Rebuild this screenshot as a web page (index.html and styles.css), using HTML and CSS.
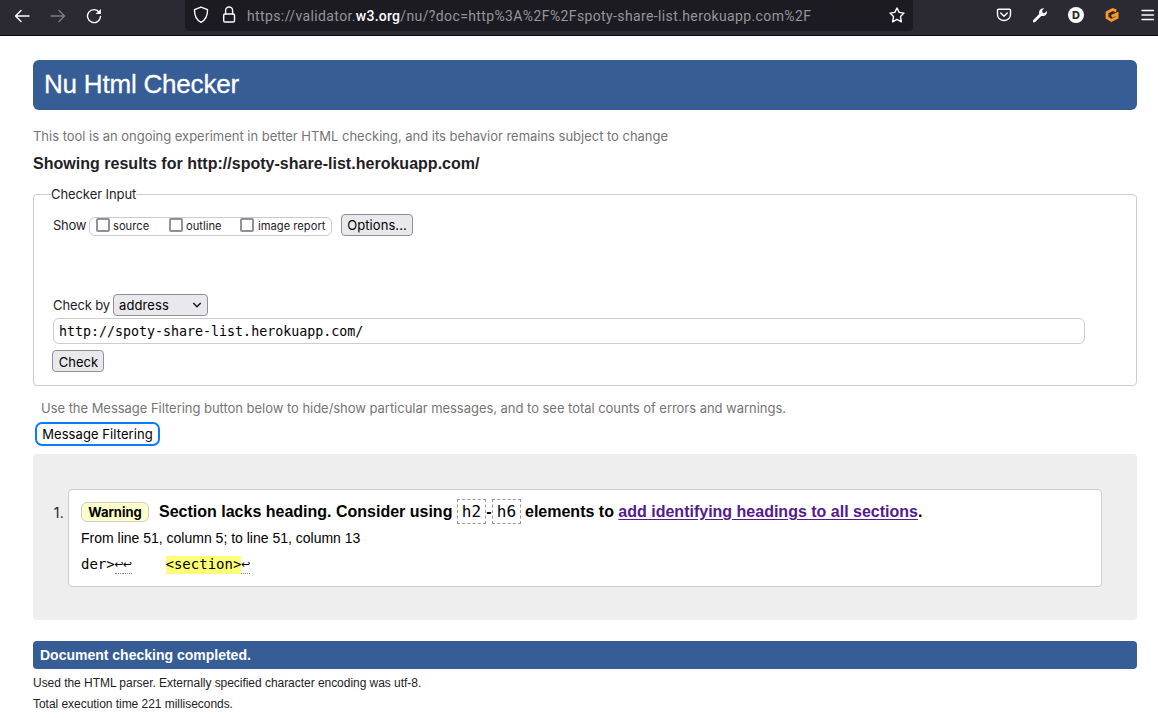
FILE: index.html
```html
<!DOCTYPE html>
<html lang="en">
<head>
<meta charset="utf-8">
<title>Showing results for http://spoty-share-list.herokuapp.com/ - Nu Html Checker</title>
<link rel="stylesheet" href="styles.css">
</head>
<body>
<nav class="toolbar">
  <div class="nav-icons">
    <svg width="16" height="16" viewBox="0 0 16 16" class="line"><path d="M1.5 8H15M7 2.5L1.5 8L7 13.500"/></svg>
    <svg width="16" height="16" viewBox="0 0 16 16" class="line dim"><path d="M1 8H14.500M9 2.500L14.500 8L9 13.500"/></svg>
    <svg width="16" height="16" viewBox="0 0 16 16" class="line"><path d="M13.300 4.300A6.500 6.500 0 1 0 14.500 8.500"/><path class="solid" d="M14.900 1V6H9.600Z"/></svg>
  </div>
  <div class="urlbar">
    <svg width="16" height="18" viewBox="0 0 16 18" class="line"><path d="M8 1.200L14.500 3.700C14.600 9.500 13 13.700 8 16.300C3 13.700 1.400 9.500 1.500 3.700Z"/></svg>
    <svg width="14" height="18" viewBox="0 0 14 18" class="line"><rect x="1.700" y="8" width="10.800" height="8" rx="1.300"/><path d="M3.600 8V4.500A3.500 3.500 0 0 1 10.600 4.500V8"/></svg>
    <span class="url">https://validator.<b>w3.org</b>/nu/?doc=http%3A%2F%2Fspoty-share-list.herokuapp.com%2F</span>
    <svg width="16" height="16" viewBox="0 0 16 16" class="line star"><path d="M8 1L10.200 5.400L15 6.100L11.500 9.600L12.400 14.800L8 12.300L3.600 14.800L4.500 9.600L1 6.100L5.800 5.400Z"/></svg>
  </div>
  <div class="tools">
    <svg width="16" height="16" viewBox="0 0 16 16" class="line"><path d="M2.500 2.200H13.500Q14.500 2.200 14.500 3.200V7.500A6.500 6 0 0 1 1.500 7.500V3.200Q1.500 2.200 2.500 2.200ZM4.700 6L8 9.200L11.300 6"/></svg>
    <svg width="16" height="16" viewBox="0 0 16 16"><path fill="#fbfbfe" d="M1.300 13L7.200 7.100C6.500 4 8.500 1 12.200 1.300L10.300 3.300V5.300L11.500 6.200L13 5.800L15 3.900C15.400 7.500 12.400 9.600 9.300 9L3.200 15Q2 15.900 1.200 14.900Q.5 14 1.300 13Z"/></svg>
    <span class="badge-d">D</span>
    <svg width="16" height="16" viewBox="0 0 16 16" class="g-logo"><path d="M12.300 3.900L8.600 2.500L3 5.600V10.800L7.500 13.400L13.100 10.500V7L7.600 9.400"/></svg>
    <svg width="16" height="16" viewBox="0 0 16 16" class="line menu"><path d="M2 3.500H13.500M2 8H13.500M2 12.500H13.500"/></svg>
  </div>
</nav>
<main class="page">
  <h1 class="banner">Nu Html Checker</h1>
  <p class="note intro">This tool is an ongoing experiment in better HTML checking, and its behavior remains subject to change</p>
  <h2 class="title">Showing results for http://spoty-share-list.herokuapp.com/</h2>
  <fieldset class="inputs">
    <legend>Checker Input</legend>
    <div class="show-row">
      <span class="show-label">Show</span>
      <span class="checks">
        <label class="c1"><input type="checkbox"><span>source</span></label>
        <label class="c2"><input type="checkbox"><span>outline</span></label>
        <label class="c3"><input type="checkbox"><span>image report</span></label>
      </span>
      <button class="btn options">Options...</button>
    </div>
    <div class="by-row">
      <span class="by-label">Check by</span>
      <button class="btn select"><span>address</span><svg width="10" height="8" viewBox="0 0 10 8"><path d="M1.300 2L5 5.700L8.700 2" fill="none" stroke="#15141a" stroke-width="1.500"/></svg></button>
    </div>
    <input class="address" type="text" spellcheck="false" value="http://spoty-share-list.herokuapp.com/">
    <button class="btn check">Check</button>
  </fieldset>
  <p class="note hint">Use the Message Filtering button below to hide/show particular messages, and to see total counts of errors and warnings.</p>
  <button class="filter">Message Filtering</button>
  <section class="results">
    <span class="num">1.</span>
    <article class="card">
      <p class="message"><strong class="warning">Warning</strong><span class="m1">Section lacks heading. Consider using</span><code>h2</code><span class="dash">-</span><code>h6</code><span class="m2">elements to <a href="#">add identifying headings to all sections</a>.</span></p>
      <p class="location">From line 51, column 5; to line 51, column 13</p>
      <p class="extract">der&gt;<span class="lf">↩</span><span class="lf">↩</span><mark>&lt;section&gt;</mark><span class="lf">↩</span></p>
    </article>
  </section>
  <p class="done">Document checking completed.</p>
  <p class="stat">Used the HTML parser. Externally specified character encoding was utf-8.</p>
  <p class="stat">Total execution time 221 milliseconds.</p>
</main>
</body>
</html>
```

FILE: styles.css
```css
* { box-sizing: border-box; }
body { margin: 0; background: #fff; color: #1f2126; font-family: Inter, sans-serif; font-size: 13px; letter-spacing: -.03px; height: 718px; overflow: hidden; }
p, h1, h2 { margin: 0; white-space: nowrap; }
svg { display: block; flex: none; }

.toolbar { display: flex; height: 36px; background: #2b2a33; border-bottom: 1px solid #0c0c0d; }
.line { fill: none; stroke: #fbfbfe; stroke-width: 1.4; stroke-linecap: round; stroke-linejoin: round; }
.line .solid { fill: #fbfbfe; stroke: none; }
.dim { opacity: .4; }
.nav-icons { display: flex; gap: 20px; width: 185px; padding: 8px 0 0 14px; }
.urlbar { display: flex; width: 728px; height: 31px; padding: 6px 8px 0; background: #1c1b22; border-radius: 0 0 4px 4px; }
.urlbar svg + svg { margin-left: 13px; }
.url { margin: 2px 0 0 11px; font: 14px/17px Roboto, sans-serif; letter-spacing: .38px; color: #96959d; white-space: nowrap; }
.url b { font-weight: 500; letter-spacing: .25px; color: #fbfbfe; }
.star { margin: 1px 0 0 auto; }
.tools { display: flex; flex: 1; gap: 20px; padding: 7px 0 0 83px; }
.badge-d { flex: none; width: 16px; height: 16px; border-radius: 50%; background: #fff; color: #2b2a33; font: 800 11px/16px Inter, sans-serif; text-align: center; }
.g-logo path { fill: none; stroke: #ff9a27; stroke-width: 2.8; stroke-linejoin: miter; }

.page { padding: 24px 21px 0 33px; }
.banner { height: 50px; padding-left: 11px; border-radius: 6px; background: #365d95; color: #fff; font: 400 26px/49px "Liberation Sans", sans-serif; letter-spacing: -.2px; -webkit-text-stroke: .3px #fff; }
.note { color: #757575; line-height: 17px; }
.intro { margin-top: 18px; letter-spacing: -.02px; }
.title { margin-top: 8px; font: 700 16px/22px "Liberation Sans", sans-serif; letter-spacing: .02px; }
.inputs { height: 200px; margin: 11px 0 0; padding: 11px 18px 0; border: 1px solid #ccc; border-radius: 4px; }
.inputs legend { height: 17px; margin-left: -1px; padding: 0; line-height: 17px; letter-spacing: -.08px; }
.show-row, .by-row { display: flex; height: 22px; line-height: 22px; padding-left: 1px; }
.show-label { width: 36px; white-space: nowrap; letter-spacing: -.25px; }
.checks { display: flex; width: 243px; height: 19px; margin-top: 3px; padding-left: 6px; border: 1px solid #ccc; border-radius: 6px; font-size: 11.200px; line-height: 17px; letter-spacing: 0; }
.checks label { display: flex; white-space: nowrap; }
.checks input { appearance: none; width: 14px; height: 14px; margin: 0 3px 0 0; border: 2px solid #8f8f9d; border-radius: 2px; background: #fff; }
.c1 { width: 73px; }
.c2 { width: 71px; }
.c3 span { margin-left: 1px; }
.btn { height: 22px; padding: 0; border: 1px solid #8f8f9d; border-radius: 4px; background: #e9e9ed; color: #000; font: 13px/20px Inter, sans-serif; white-space: nowrap; }
.options { width: 72px; margin-left: 9px; letter-spacing: .08px; }
.by-row { margin-top: 58px; }
.by-label { width: 60px; white-space: nowrap; letter-spacing: -.12px; }
.select { display: flex; width: 95px; align-items: center; justify-content: space-between; padding: 0 5px; letter-spacing: .1px; }
.address { display: block; width: 1032px; height: 26px; margin: 2px 0 0 1px; padding: 1px 5px 0; border: 1px solid #ccc; border-radius: 6px; font: 13.300px/23px "DejaVu Sans Mono", monospace; color: #000; }
.check { display: block; width: 52px; margin-top: 6px; padding: 2px 0 0 1px; line-height: 18px; }
.hint { margin: 14px 0 0 8px; letter-spacing: -.035px; }
.filter { display: block; width: 125px; height: 24px; margin: 5px 0 0 2px; padding: 0; border: 2px solid #0a7cff; border-radius: 7px; background: #fff; color: #000; font: 13px/20px Inter, sans-serif; letter-spacing: .08px; white-space: nowrap; }

.results { display: flex; height: 166px; margin-top: 8px; padding: 35px 35px 33px 0; border-radius: 4px; background: #eee; }
.num { width: 35px; padding: 15px 4px 0 0; text-align: right; font-size: 14px; line-height: 18px; letter-spacing: .3px; }
.card { flex: 1; padding: 10px 12px 0; border: 1px solid #ccc; border-radius: 4px; background: #fff; color: #000; letter-spacing: 0; }
.message { display: flex; height: 24px; font: 700 16px/23px "Liberation Sans", sans-serif; }
.warning { width: 68px; height: 20px; margin: 2px 10px 0 0; border: 1px solid #ccc; border-radius: 6px; background: #ffc; font: 700 13px/19px Inter, sans-serif; text-align: center; }
.m1 { width: 298px; }
.message code { width: 29px; height: 25px; margin-top: -1px; border: 1px dashed #999; font: 400 16px/23px "DejaVu Sans Mono", monospace; text-align: center; }
.dash { width: 6px; text-align: center; }
.m2 { margin-left: 4px; }
.m2 a { color: #551a8b; text-decoration: underline; text-underline-offset: 2px; }
.location { margin-top: 5px; font: 14px/19px "Liberation Sans", sans-serif; }
.extract { display: flex; margin-top: 8px; font: 14px/17px "DejaVu Sans Mono", monospace; }
.lf { display: flex; justify-content: center; width: 8.400px; height: 18px; border-bottom: 1px dotted #888; font-family: "DejaVu Sans", sans-serif; font-size: 11px; }
.extract mark { margin-left: 34px; background: #ff7; color: #000; }
.done { height: 28px; margin: 21px 0 4px; padding-left: 7px; border-radius: 4px; background: #365d95; color: #fff; font: 700 14px/28px "Liberation Sans", sans-serif; letter-spacing: 0; }
.stat { font: 12px/21px "Liberation Sans", sans-serif; letter-spacing: -.04px; }
```
